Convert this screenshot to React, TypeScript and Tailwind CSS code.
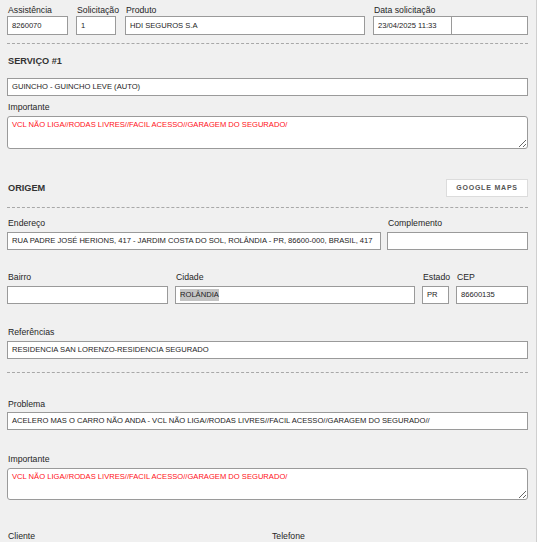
import React from 'react';

const font = { fontFamily: '"Liberation Sans", Arial, sans-serif' };

function Label({ children, className = '' }: { children: React.ReactNode; className?: string }) {
  return (
    <div className={`text-[8.7px] leading-[12px] h-[12px] text-[#262626] pl-px whitespace-nowrap ${className}`}>
      {children}
    </div>
  );
}

function Box({ value = '', className = '', highlight = false }: { value?: string; className?: string; highlight?: boolean }) {
  return (
    <div
      className={`h-[18px] bg-white border border-[#9a9a9a] px-[4px] flex items-center text-[7.6px] text-[#1c1c1c] whitespace-nowrap overflow-hidden ${className}`}
    >
      {highlight ? <span className="bg-[#c4c4c4]">{value}</span> : value}
    </div>
  );
}

function Note({ value, className = '' }: { value: string; className?: string }) {
  return (
    <textarea
      readOnly
      defaultValue={value}
      style={font}
      className={`block w-full bg-white border border-[#9a9a9a] rounded-[3px] px-[4px] pt-[3px] text-[7.6px] leading-[10px] text-[#ff1020] outline-none ${className}`}
    />
  );
}

function Dashed({ className = '' }: { className?: string }) {
  return <div className={`border-t border-dashed border-[#a8a8a8] ${className}`} />;
}

export default function App() {
  const importante = 'VCL NÃO LIGA//RODAS LIVRES//FACIL ACESSO//GARAGEM DO SEGURADO/';

  return (
    <div className="min-h-screen bg-white" style={font}>
      <div className="w-[537px] min-h-[542px] bg-[#f0f0f0] border-r border-[#cfcfcf] pl-[7px] pr-[8px] pt-[4px] pb-4">
        {/* Cabeçalho */}
        <div className="flex">
          <div className="w-[61px]">
            <Label>Assistência</Label>
            <Box value="8260070" className="h-[19px]" />
          </div>
          <div className="w-[40px] ml-[8px]">
            <Label>Solicitação</Label>
            <Box value="1" className="h-[19px]" />
          </div>
          <div className="w-[240px] ml-[9px]">
            <Label>Produto</Label>
            <Box value="HDI SEGUROS S.A" className="h-[19px]" />
          </div>
          <div className="ml-[8px] flex-1">
            <Label>Data solicitação</Label>
            <div className="flex">
              <Box value="23/04/2025 11:33" className="h-[19px] w-[79px]" />
              <Box className="h-[19px] flex-1 -ml-px" />
            </div>
          </div>
        </div>

        <Dashed className="mt-[8px]" />

        {/* Serviço */}
        <div className="mt-[11px] text-[9.2px] leading-[12px] font-bold text-[#333] pl-px">SERVIÇO #1</div>
        <Box value="GUINCHO - GUINCHO LEVE (AUTO)" className="mt-[11px]" />
        <Label className="mt-[5px]">Importante</Label>
        <Note value={importante} className="mt-[3px] h-[33px]" />

        {/* Origem */}
        <div className="mt-[30px] h-[18px] flex items-center justify-between">
          <div className="text-[9.2px] leading-[12px] font-bold text-[#333] pl-px">ORIGEM</div>
          <button className="w-[82px] h-[18px] bg-white border border-[#dcdcdc] text-[7px] font-bold tracking-[0.8px] text-[#555]">
            GOOGLE MAPS
          </button>
        </div>

        <Dashed className="mt-[10px]" />

        <div className="flex mt-[9px]">
          <div className="w-[374px]">
            <Label>Endereço</Label>
            <Box
              value="RUA PADRE JOSÉ HERIONS, 417 - JARDIM COSTA DO SOL, ROLÂNDIA - PR, 86600-000, BRASIL, 417"
              className="mt-[3px]"
            />
          </div>
          <div className="ml-[6px] flex-1">
            <Label>Complemento</Label>
            <Box className="mt-[3px]" />
          </div>
        </div>

        <div className="flex mt-[21px]">
          <div className="w-[161px]">
            <Label>Bairro</Label>
            <Box className="mt-[3px]" />
          </div>
          <div className="w-[240px] ml-[7px]">
            <Label>Cidade</Label>
            <Box value="ROLÂNDIA" highlight className="mt-[3px]" />
          </div>
          <div className="w-[27px] ml-[7px]">
            <Label>Estado</Label>
            <Box value="PR" className="mt-[3px]" />
          </div>
          <div className="ml-[7px] flex-1">
            <Label>CEP</Label>
            <Box value="86600135" className="mt-[3px]" />
          </div>
        </div>

        <Label className="mt-[22px]">Referências</Label>
        <Box value="RESIDENCIA SAN LORENZO-RESIDENCIA SEGURADO" className="mt-[3px]" />

        <Dashed className="mt-[13px]" />

        <Label className="mt-[25px]">Problema</Label>
        <Box
          value="ACELERO MAS O CARRO NÃO ANDA - VCL NÃO LIGA//RODAS LIVRES//FACIL ACESSO//GARAGEM DO SEGURADO//"
          className="mt-[2px]"
        />

        <Label className="mt-[23px]">Importante</Label>
        <Note value={importante} className="mt-[3px] h-[32px]" />

        <div className="flex mt-[30px]">
          <Label className="w-[264px]">Cliente</Label>
          <Label>Telefone</Label>
        </div>
      </div>
    </div>
  );
}
